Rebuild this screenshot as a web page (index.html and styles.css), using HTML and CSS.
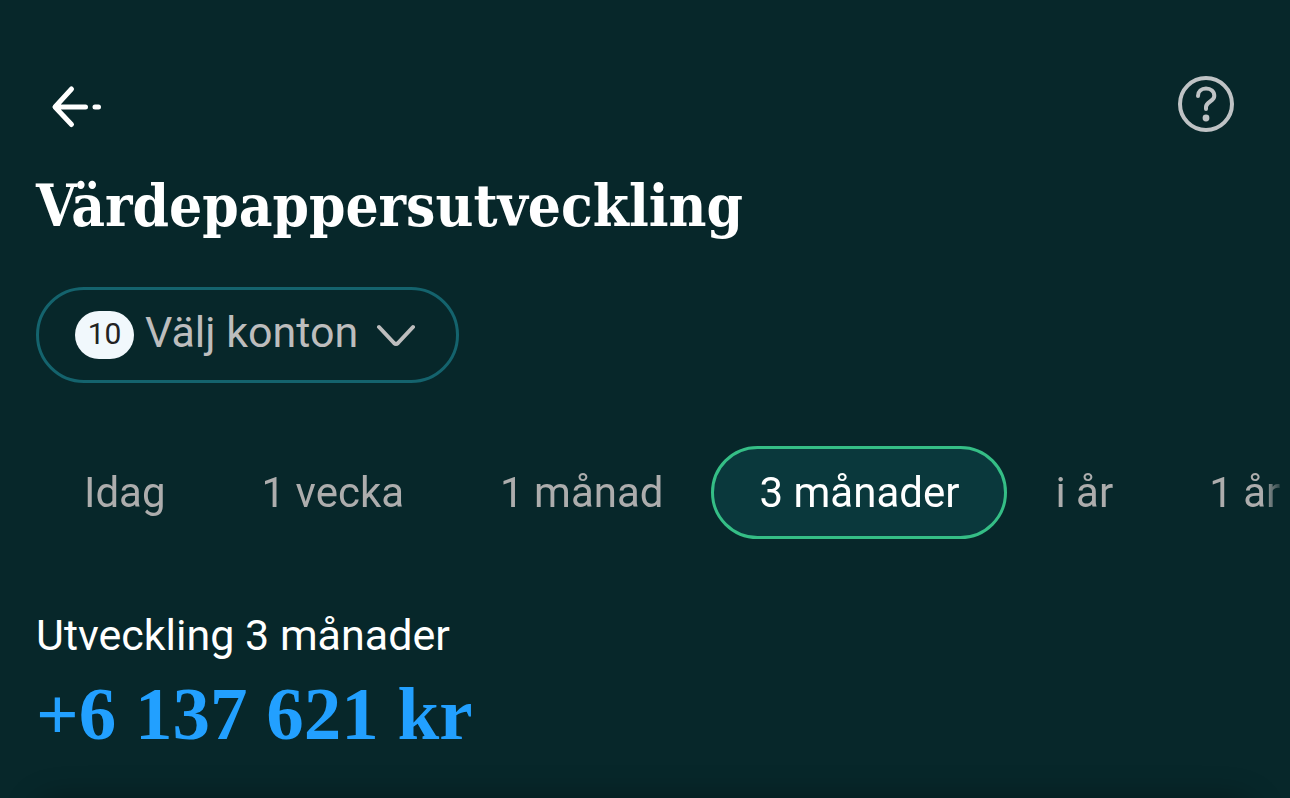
FILE: index.html
```html
<!DOCTYPE html>
<html lang="sv">
<head>
	<meta charset="UTF-8">
	<meta name="viewport" content="width=device-width, initial-scale=1">
	<title>Värdepappersutveckling</title>
	<link rel="stylesheet" href="styles.css">
</head>
<body>
<div class="page">
	<header class="topbar">
		<button type="button" class="icon-btn" aria-label="Tillbaka">
			<svg class="icon-back" viewBox="0 0 60 56" width="60" height="56">
				<path d="M29.500 13L13 31L29.500 48.500M14 31H43.500M53 31H56.500"/>
			</svg>
		</button>
		<button type="button" class="icon-btn" aria-label="Hjälp">
			<svg class="icon-help" viewBox="0 0 56 56" width="56" height="56">
				<circle cx="28" cy="28" r="26"/>
				<path d="M20 20C20 15.500 23.500 12.500 28 12.500C32.800 12.500 36.300 15.500 36.300 20C36.300 25.500 28 25.500 28 31V33"/>
				<circle class="dot" cx="28" cy="42" r="3.400"/>
			</svg>
		</button>
	</header>

	<h1 class="title">Värdepappersutveckling</h1>

	<button type="button" class="account-btn">
		<span class="badge">10</span>
		<span class="account-label">Välj konton</span>
		<svg class="chevron" viewBox="0 0 40 24" width="40" height="24">
			<path d="M3 4L18 20Q20 22 22 20L37 4"/>
		</svg>
	</button>

	<nav class="periods">
		<button type="button" class="period">Idag</button>
		<button type="button" class="period">1 vecka</button>
		<button type="button" class="period">1 månad</button>
		<button type="button" class="period current">3 månader</button>
		<button type="button" class="period">i år</button>
		<button type="button" class="period">1 år</button>
	</nav>

	<section class="result">
		<h2 class="result-label">Utveckling 3 månader</h2>
		<p class="result-value">+6 137 621 kr</p>
	</section>

	<div class="card"></div>
</div>
</body>
</html>
```

FILE: styles.css
```css
*{
	margin: 0;
	padding: 0;
	box-sizing: border-box;
}
body{
	background-color: #07272a;
	color: #fff;
	font-family: Roboto, sans-serif;
	font-size: 42px;
	line-height: 48px;
}
button{
	border: 0;
	background: none;
	color: inherit;
	font: inherit;
	cursor: pointer;
}
svg{
	display: block;
	fill: none;
	stroke-linecap: round;
	stroke-linejoin: round;
}
.page{
	height: 100vh;
	overflow: hidden;
	padding: 76px 36px 0;
}
.topbar{
	display: flex;
	justify-content: space-between;
	padding: 0 20px 0 6px;
}
.icon-back{
	stroke: #fff;
	stroke-width: 5;
}
.icon-help{
	stroke: #bfc3c5;
	stroke-width: 4;
}
.icon-help .dot{
	fill: #bfc3c5;
	stroke: none;
}
.title{
	margin-top: 34px;
	font-family: "Roboto Slab", "DejaVu Serif Condensed", "DejaVu Serif", serif;
	font-size: 58px;
	line-height: 80px;
	font-weight: bold;
}
.account-btn{
	display: flex;
	align-items: center;
	height: 96px;
	margin-top: 41px;
	padding: 0 40px 0 36px;
	border: 3px solid #14636d;
	border-radius: 48px;
	color: #bdbdbd;
}
.badge{
	width: 59px;
	height: 48px;
	border-radius: 24px;
	background-color: #f1f8fc;
	color: #222;
	font-size: 30px;
	line-height: 46px;
}
.account-label{
	margin: 0 18px 6px 11px;
	font-size: 43px;
}
.chevron{
	stroke: #bdbdbd;
	stroke-width: 4;
}
.periods{
	display: flex;
	margin-top: 63px;
	margin-right: -36px;
	overflow: hidden;
	-webkit-mask-image: linear-gradient(to left, transparent 4px, #000 28px);
	mask-image: linear-gradient(to left, transparent 4px, #000 28px);
}
.period{
	flex: none;
	height: 93px;
	padding: 0 45px;
	border: 3px solid transparent;
	border-radius: 48px;
	color: #adadad;
	line-height: 46px;
}
.period.current{
	border-color: #35be86;
	background-color: #0a383c;
	color: #fff;
}
.result{
	margin-top: 72px;
}
.result-label{
	font-size: 43px;
	font-weight: normal;
}
.result-value{
	margin-top: 8px;
	color: #22a0ff;
	font-family: "Roboto Slab", "Liberation Serif", serif;
	font-size: 75px;
	line-height: 94px;
	font-weight: bold;
}
.card{
	height: 400px;
	margin-top: 40px;
	border-radius: 24px;
	background-color: #07272a;
	box-shadow: 0 0 32px rgba(0, 0, 0, .4);
}
```
